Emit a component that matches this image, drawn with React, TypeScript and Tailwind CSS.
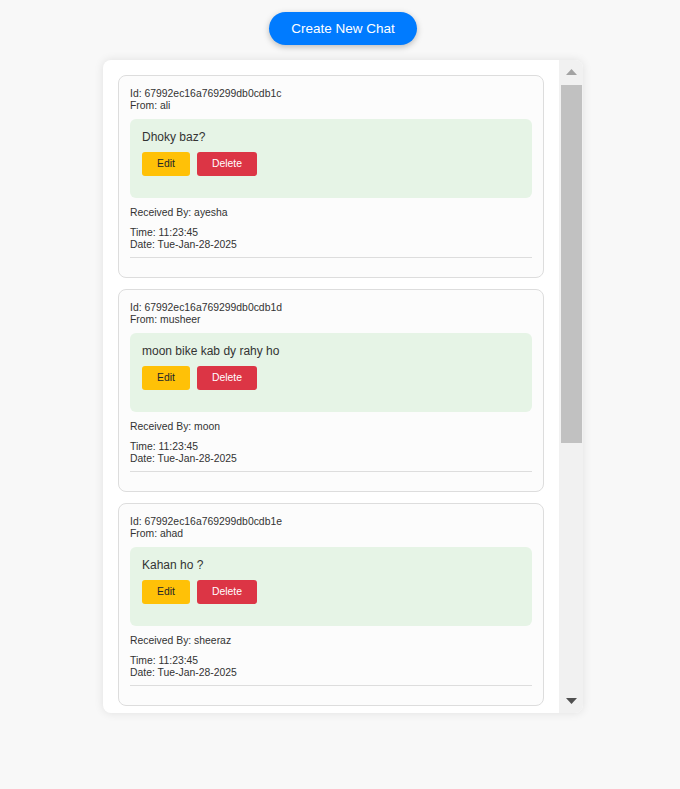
import React from "react";

type Chat = {
  id: string;
  from: string;
  msg: string;
  to: string;
};

const chats: Chat[] = [
  { id: "67992ec16a769299db0cdb1c", from: "ali", msg: "Dhoky baz?", to: "ayesha" },
  { id: "67992ec16a769299db0cdb1d", from: "musheer", msg: "moon bike kab dy rahy ho", to: "moon" },
  { id: "67992ec16a769299db0cdb1e", from: "ahad", msg: "Kahan ho ?", to: "sheeraz" },
];

function ChatCard({ chat }: { chat: Chat }) {
  return (
    <div className="shrink-0 rounded-[8px] border border-[#dddddd] bg-[#fcfcfc] px-[11px] pt-[12px] pb-[12px] text-[10.4px] leading-[12px] text-[#333333]">
      <div>Id: {chat.id}</div>
      <div>From: {chat.from}</div>
      {/* message box */}
      <div className="mt-[7px] rounded-[6px] bg-[#e6f4e6] px-[12px] pt-[11px] pb-[22px]">
        <p className="text-[12px] leading-[14px] text-[#333333]">{chat.msg}</p>
        <div className="mt-[8px] flex gap-[7px]">
          <button className="flex h-[24px] w-[48px] items-center justify-center rounded-[3px] bg-[#ffc107] text-[10.4px] text-[#212529]">
            Edit
          </button>
          <button className="flex h-[24px] w-[60px] items-center justify-center rounded-[3px] bg-[#dc3545] text-[10.4px] text-white">
            Delete
          </button>
        </div>
      </div>
      <div className="mt-[9px]">Received By: {chat.to}</div>
      <div className="mt-[8px]">Time: 11:23:45</div>
      <div>Date: Tue-Jan-28-2025</div>
      <hr className="mt-[6px] mb-[7px] border-0 border-t border-[#dddddd]" />
    </div>
  );
}

export default function App() {
  return (
    <div
      className="min-h-[789px] w-full bg-[#f8f8f8] pt-[12px]"
      style={{ fontFamily: '"Liberation Sans", Arial, sans-serif' }}
    >
      <div className="flex flex-col items-center pl-[6px]">
        <button className="h-[33px] w-[148px] rounded-full bg-[#007bff] pt-px text-[13.5px] text-white shadow-[0_2px_6px_rgba(0,0,0,0.25)]">
          Create New Chat
        </button>

        {/* chat list panel */}
        <div className="mt-[15px] flex h-[653px] w-[480px] overflow-hidden rounded-[8px] bg-white shadow-[0_0_10px_rgba(0,0,0,0.1)]">
          <div className="flex flex-1 flex-col gap-[11px] overflow-hidden p-[15px]">
            {chats.map((c) => (
              <ChatCard key={c.id} chat={c} />
            ))}
          </div>

          {/* scrollbar */}
          <div className="flex w-[24px] flex-col bg-[#f1f1f1]">
            <div className="flex h-[24px] items-center justify-center">
              <svg width="11" height="6" viewBox="0 0 11 6">
                <polygon points="5.5,0 11,6 0,6" fill="#a3a3a3" />
              </svg>
            </div>
            <div className="mx-[1.5px] mt-[1px] h-[358px] bg-[#c1c1c1]" />
            <div className="flex-1" />
            <div className="flex h-[24px] items-center justify-center">
              <svg width="11" height="6" viewBox="0 0 11 6">
                <polygon points="0,0 11,0 5.5,6" fill="#505050" />
              </svg>
            </div>
          </div>
        </div>
      </div>
    </div>
  );
}
